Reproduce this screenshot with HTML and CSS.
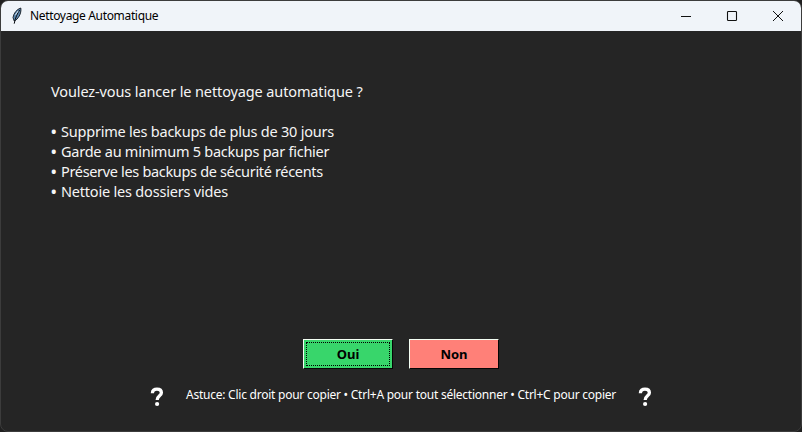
FILE: index.html
```
<!DOCTYPE html>
<html lang="fr">
<head>
<meta charset="utf-8">
<title>Nettoyage Automatique</title>
<link rel="stylesheet" href="styles.css">
</head>
<body>
<div class="window">
  <header class="titlebar">
    <svg class="feather" width="12" height="18" viewBox="0 0 12 18">
      <path d="M9.8 1C6 2.2 2.7 6 2 10.5L3.2 14C7 12.5 10.7 6.5 9.8 1Z" fill="#5d88b0" stroke="#10151c" stroke-width=".9"/>
      <path d="M8.7 3C6.4 6.4 4.4 10.4 3.2 16.7" fill="none" stroke="#080b10" stroke-width="1"/>
      <path d="M7.1 4L4.3 8.2" stroke="#d5e4f0" stroke-width="1"/>
    </svg>
    <h1 class="title">Nettoyage Automatique</h1>
    <div class="controls">
      <svg width="12" height="12" viewBox="0 0 12 12"><path d="M1 6.5H11" stroke="#111" fill="none"/></svg>
      <svg width="12" height="12" viewBox="0 0 12 12"><rect x="1.5" y="1.5" width="9" height="9" rx=".8" stroke="#111" stroke-width="1.1" fill="none"/></svg>
      <svg width="12" height="12" viewBox="0 0 12 12"><path d="M1 1L11 11M11 1L1 11" stroke="#111" fill="none"/></svg>
    </div>
  </header>
  <main class="message">
    <p class="question">Voulez-vous lancer le nettoyage automatique ?</p>
    <p class="item supprime"><span class="bullet">• </span>Supprime les backups de plus de 30 jours</p>
    <p class="item garde"><span class="bullet">• </span>Garde au minimum 5 backups par fichier</p>
    <p class="item preserve"><span class="bullet">• </span>Préserve les backups de sécurité récents</p>
    <p class="item nettoie"><span class="bullet">• </span>Nettoie les dossiers vides</p>
  </main>
  <div class="actions">
    <button class="btn yes">Oui</button>
    <button class="btn no">Non</button>
  </div>
  <footer class="tip">
    <svg class="help" width="14" height="20" viewBox="0 0 14 20"><path d="M2.4 6.2C2.4 3.2 4.2 2.2 7 2.2C9.9 2.2 11.4 3.6 11.4 5.8C11.4 9 7.2 8.8 7.2 13" fill="none" stroke="#fff" stroke-width="3.3"/><circle cx="7.1" cy="17" r="2.1" fill="#fff"/></svg>
    <span class="tip-text">Astuce: Clic droit pour copier • Ctrl+A pour tout sélectionner • Ctrl+C pour copier</span>
    <svg class="help" width="14" height="20" viewBox="0 0 14 20"><path d="M2.4 6.2C2.4 3.2 4.2 2.2 7 2.2C9.9 2.2 11.4 3.6 11.4 5.8C11.4 9 7.2 8.8 7.2 13" fill="none" stroke="#fff" stroke-width="3.3"/><circle cx="7.1" cy="17" r="2.1" fill="#fff"/></svg>
  </footer>
</div>
</body>
</html>
```

FILE: styles.css
```
* { box-sizing: border-box; }
body {
  margin: 0;
  width: 802px;
  height: 432px;
  overflow: hidden;
  background: #202020;
  font-family: "Noto Sans", "Open Sans", sans-serif;
}
.window {
  display: flex;
  flex-direction: column;
  width: 802px;
  height: 432px;
  border: 1px solid #3c3c3c;
  border-radius: 8px;
  background: #252525;
  overflow: hidden;
}
.titlebar {
  display: flex;
  align-items: center;
  height: 30px;
  flex: none;
  padding: 0 17px 0 10px;
  background: #f0f4f9;
}
.feather { flex: none; margin-top: -1px; }
.title {
  flex: 1;
  margin: 0 0 0 7px;
  font-size: 12px;
  line-height: 20px;
  font-weight: 400;
  letter-spacing: -.34px;
  color: #000;
  white-space: nowrap;
}
.controls { display: flex; gap: 34px; margin-top: -1px; }
.controls svg { display: block; }
.message {
  height: 308px;
  flex: none;
  padding: 50px 50px 0;
  color: #f5f5f5;
  font-size: 14.5px;
  line-height: 20px;
  white-space: nowrap;
}
.message p { margin: 0; height: 20px; }
.message .question { margin-bottom: 20px; letter-spacing: -.12px; }
.item { display: flex; }
.bullet { width: 10px; flex: none; letter-spacing: 0; font-size: 14.5px; font-weight: 700; }
.supprime { letter-spacing: -.22px; }
.garde { letter-spacing: -.25px; }
.preserve { letter-spacing: -.33px; }
.nettoie { letter-spacing: -.2px; }
.actions {
  display: flex;
  flex: none;
  gap: 16px;
  padding-left: 302px;
  height: 31px;
}
.btn {
  display: flex;
  align-items: center;
  justify-content: center;
  width: 90px;
  height: 30px;
  padding: 0 0 1px;
  border: 1px solid;
  border-color: #f4fff4 #050505 #050505 #f4fff4;
  font: 700 13px/18px "Noto Sans", sans-serif;
  color: #000;
}
.yes {
  background: #38d66b;
  outline: 1px dotted #000;
  outline-offset: -4px;
}
.no { background: #ff8078; }
.tip {
  display: flex;
  padding: 17px 0 0 149px;
  color: #fff;
  font-size: 12px;
  line-height: 16px;
  white-space: nowrap;
}
.tip-text { width: 452px; margin-left: 22px; letter-spacing: -.24px; }
.help { flex: none; margin-top: -.5px; }
```
